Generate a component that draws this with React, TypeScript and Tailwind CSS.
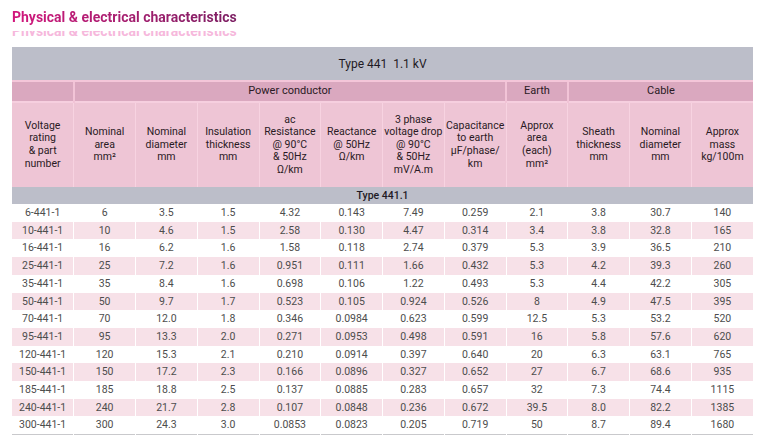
import React from 'react';

const rows: string[][] = [
  ['6-441-1', '6', '3.5', '1.5', '4.32', '0.143', '7.49', '0.259', '2.1', '3.8', '30.7', '140'],
  ['10-441-1', '10', '4.6', '1.5', '2.58', '0.130', '4.47', '0.314', '3.4', '3.8', '32.8', '165'],
  ['16-441-1', '16', '6.2', '1.6', '1.58', '0.118', '2.74', '0.379', '5.3', '3.9', '36.5', '210'],
  ['25-441-1', '25', '7.2', '1.6', '0.951', '0.111', '1.66', '0.432', '5.3', '4.2', '39.3', '260'],
  ['35-441-1', '35', '8.4', '1.6', '0.698', '0.106', '1.22', '0.493', '5.3', '4.4', '42.2', '305'],
  ['50-441-1', '50', '9.7', '1.7', '0.523', '0.105', '0.924', '0.526', '8', '4.9', '47.5', '395'],
  ['70-441-1', '70', '12.0', '1.8', '0.346', '0.0984', '0.623', '0.599', '12.5', '5.3', '53.2', '520'],
  ['95-441-1', '95', '13.3', '2.0', '0.271', '0.0953', '0.498', '0.591', '16', '5.8', '57.6', '620'],
  ['120-441-1', '120', '15.3', '2.1', '0.210', '0.0914', '0.397', '0.640', '20', '6.3', '63.1', '765'],
  ['150-441-1', '150', '17.2', '2.3', '0.166', '0.0896', '0.327', '0.652', '27', '6.7', '68.6', '935'],
  ['185-441-1', '185', '18.8', '2.5', '0.137', '0.0885', '0.283', '0.657', '32', '7.3', '74.4', '1115'],
  ['240-441-1', '240', '21.7', '2.8', '0.107', '0.0848', '0.236', '0.672', '39.5', '8.0', '82.2', '1385'],
  ['300-441-1', '300', '24.3', '3.0', '0.0853', '0.0823', '0.205', '0.719', '50', '8.7', '89.4', '1680'],
];

const headers: string[][] = [
  ['Voltage', 'rating', '& part', 'number'],
  ['Nominal', 'area', 'mm²'],
  ['Nominal', 'diameter', 'mm'],
  ['Insulation', 'thickness', 'mm'],
  ['ac', 'Resistance', '@ 90°C', '& 50Hz', 'Ω/km'],
  ['Reactance', '@ 50Hz', 'Ω/km'],
  ['3 phase', 'voltage drop', '@ 90°C', '& 50Hz', 'mV/A.m'],
  ['Capacitance', 'to earth', 'µF/phase/', 'km'],
  ['Approx', 'area', '(each)', 'mm²'],
  ['Sheath', 'thickness', 'mm'],
  ['Nominal', 'diameter', 'mm'],
  ['Approx', 'mass', 'kg/100m'],
];

const title = 'Physical & electrical characteristics';

export default function App() {
  return (
    <div className="w-[768px] h-[445px] bg-white overflow-hidden px-3 pt-[9px]" style={{ fontFamily: 'Roboto, "Liberation Sans", sans-serif' }}>
      <h1 className="text-[14px] leading-[17px] font-bold bg-gradient-to-r from-[#d2157c] to-[#7c1f63] bg-clip-text text-transparent w-fit">
        {title}
      </h1>
      {/* faint printing ghost of the title */}
      <div className="h-[5px] mt-[5px] overflow-hidden w-fit" aria-hidden="true">
        <div className="text-[14px] leading-[17px] font-bold text-[#f6b8dc] -mt-[8px]">{title}</div>
      </div>
      <table className="mt-[11px] w-[741px] table-fixed border-collapse text-center">
        <colgroup>
          {headers.map((_, i) => (
            <col key={i} className="w-[61.75px]" />
          ))}
        </colgroup>
        <thead>
          <tr className="h-[34px] bg-[#bcbec9]">
            <th colSpan={12} className="text-[12px] font-normal text-[#1f1a24] border-b-2 border-[#f4c6d9]">
              Type 441&nbsp; 1.1 kV
            </th>
          </tr>
          <tr className="h-[21px] bg-[#daa8bf] text-[11px] font-normal text-[#2a1a24]">
            <th className="font-normal border-r-2 border-[#f2c4d7]"></th>
            <th colSpan={7} className="font-normal border-r-2 border-[#f2c4d7]">Power conductor</th>
            <th className="font-normal border-r-2 border-[#f2c4d7]">Earth</th>
            <th colSpan={3} className="font-normal">Cable</th>
          </tr>
          <tr className="h-[85px] bg-[#eec5d5] text-[10.5px] leading-[12.6px] text-[#2a1a24] border-t-2 border-[#f6cfdf]">
            {headers.map((h, i) => (
              <th key={i} className={`px-0 font-normal whitespace-nowrap align-middle ${i < 11 ? 'border-r border-[#f7d3e1]' : ''}`}>
                {h.map((l, j) => (
                  <div key={j}>{l}</div>
                ))}
              </th>
            ))}
          </tr>
          <tr className="h-[17px] bg-[#bcbec9]">
            <th colSpan={12} className="text-[10.5px] font-medium text-[#1f1a24]">Type 441.1</th>
          </tr>
        </thead>
        <tbody className="text-[10.5px] text-[#4d4d4d] border-b border-[#c9c9cc]">
          {rows.map((r, i) => (
            <tr key={i} className={`h-[17.7px] ${i % 2 === 1 ? 'bg-[#f7e1e8]' : 'bg-white'}`}>
              {r.map((c, j) => (
                <td key={j} className={`p-0 leading-[17.7px] ${j < 11 ? 'border-r border-white' : ''}`}>
                  {c}
                </td>
              ))}
            </tr>
          ))}
        </tbody>
      </table>
    </div>
  );
}
